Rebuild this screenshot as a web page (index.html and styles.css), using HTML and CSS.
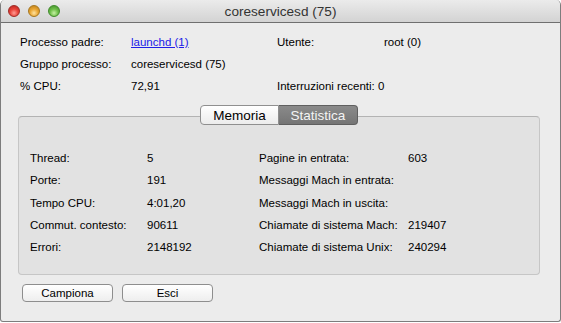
FILE: index.html
```html
<!DOCTYPE html>
<html lang="it">
<head>
    <meta charset="UTF-8">
    <title>coreservicesd (75)</title>
    <link rel="stylesheet" href="styles.css">
</head>
<body>
    <div class="window">
        <!-- Title bar -->
        <div class="titlebar">
            <div class="lights">
                <span class="light close"></span>
                <span class="light minimize"></span>
                <span class="light zoom"></span>
            </div>
            <div class="title">coreservicesd (75)</div>
        </div>

        <div class="content">
            <!-- Process info -->
            <div class="info">
                <span>Processo padre:</span>
                <span><a href="#" class="link">launchd (1)</a></span>
                <span>Utente:</span>
                <span>root (0)</span>

                <span>Gruppo processo:</span>
                <span>coreservicesd (75)</span>
                <span></span>
                <span></span>

                <span>% CPU:</span>
                <span>72,91</span>
                <span class="nowrap">Interruzioni recenti: 0</span>
                <span></span>
            </div>

            <!-- Tabbed group box -->
            <div class="groupbox">
                <div class="tabs">
                    <span class="tab">Memoria</span>
                    <span class="tab active">Statistica</span>
                </div>
                <div class="stats">
                    <span>Thread:</span><span>5</span>
                    <span>Pagine in entrata:</span><span>603</span>

                    <span>Porte:</span><span>191</span>
                    <span>Messaggi Mach in entrata:</span><span></span>

                    <span>Tempo CPU:</span><span>4:01,20</span>
                    <span>Messaggi Mach in uscita:</span><span></span>

                    <span>Commut. contesto:</span><span>90611</span>
                    <span>Chiamate di sistema Mach:</span><span>219407</span>

                    <span>Errori:</span><span>2148192</span>
                    <span>Chiamate di sistema Unix:</span><span>240294</span>
                </div>
            </div>

            <!-- Buttons -->
            <div class="buttons">
                <button class="btn">Campiona</button>
                <button class="btn">Esci</button>
            </div>
        </div>
    </div>
</body>
</html>
```

FILE: styles.css
```css
/* General */
body {
    margin: 0;
    background: #ffffff;
    font-family: 'Liberation Sans', Arial, sans-serif;
    font-size: 11.5px;
    color: #000;
}

/* Window */
.window {
    width: 561px;
    height: 322px;
    box-sizing: border-box;
    background: #ececec;
    border: 1px solid #7d7d7d;
    border-top: none;
    border-radius: 5px 5px 3px 3px;
    overflow: hidden;
}

/* Title bar */
.titlebar {
    position: relative;
    height: 22px;
    background: linear-gradient(#ebebeb, #d3d3d3);
    border-bottom: 1px solid #6f6f6f;
    display: flex;
    align-items: center;
    justify-content: center;
}

.lights {
    position: absolute;
    left: 7px;
    top: 5px;
    display: flex;
    gap: 8px;
}

.light {
    width: 12px;
    height: 12px;
    border-radius: 50%;
    box-sizing: border-box;
}

.light.close {
    background: radial-gradient(circle at 50% 70%, #ff9c93 0%, #e9443b 45%, #b8231c 100%);
    border: 1px solid #9e2a25;
}

.light.minimize {
    background: radial-gradient(circle at 50% 70%, #ffe3a0 0%, #eaa734 45%, #b97a12 100%);
    border: 1px solid #a5761f;
}

.light.zoom {
    background: radial-gradient(circle at 50% 70%, #c6f1a4 0%, #6fc04a 45%, #3f8c27 100%);
    border: 1px solid #3f8a2b;
}

.title {
    font-size: 13.6px;
    color: #333;
}

/* Content */
.content {
    padding: 8px 0 0 0;
}

.info {
    display: grid;
    grid-template-columns: 111px 146px 107px auto;
    grid-auto-rows: 22px;
    align-items: center;
    padding-left: 19px;
}

.nowrap {
    white-space: nowrap;
}

.link {
    color: #2020e8;
    text-decoration: underline;
}

/* Group box */
.groupbox {
    margin: 19px 20px 0 17px;
    height: 159px;
    box-sizing: border-box;
    background: #e2e2e2;
    border: 1px solid #c6c6c6;
    border-top-color: #b3b3b3;
    border-radius: 4px;
}

.tabs {
    display: flex;
    justify-content: center;
    margin-top: -12px;
    height: 20px;
}

.tab {
    width: 79px;
    box-sizing: border-box;
    display: flex;
    align-items: center;
    justify-content: center;
    font-size: 13.5px;
    background: linear-gradient(#ffffff, #ececec);
    border: 1px solid #8f8f8f;
    border-radius: 4px 0 0 4px;
    color: #000;
}

.tab.active {
    background: linear-gradient(#8a8a8a, #757575);
    border-color: #5f5f5f;
    border-left: none;
    border-radius: 0 4px 4px 0;
    color: #f4f4f4;
}

.stats {
    display: grid;
    grid-template-columns: 117px 112px 149px auto;
    grid-auto-rows: 22.25px;
    align-items: center;
    padding: 22px 0 0 11px;
}

/* Buttons */
.buttons {
    display: flex;
    gap: 9px;
    padding: 9px 0 0 21px;
}

.btn {
    width: 91px;
    height: 18px;
    padding: 0;
    font-family: inherit;
    font-size: 11.5px;
    color: #000;
    background: linear-gradient(#ffffff, #eeeeee);
    border: 1px solid #8e8e8e;
    border-radius: 4px;
}
```
